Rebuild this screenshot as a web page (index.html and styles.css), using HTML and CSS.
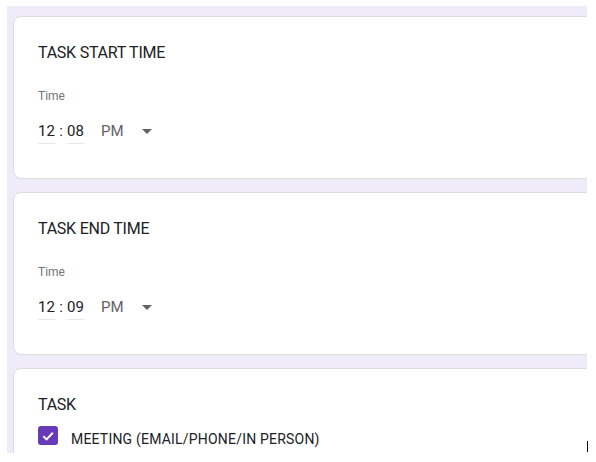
FILE: index.html
```html
<!DOCTYPE html>
<html>
<head>
<meta charset="utf-8">
<link rel="stylesheet" href="styles.css">
</head>
<body>
<div class="page">
  <div class="card">
    <div class="title">TASK START TIME</div>
    <div class="label">Time</div>
    <div class="time-row">
      <span class="field">12</span>
      <span class="colon">:</span>
      <span class="field">08</span>
      <span class="ampm">PM</span>
      <svg class="arrow" width="10" height="5" viewBox="0 0 10 5"><path d="M0 0 L5 5 L10 0 Z" fill="#5f6368"/></svg>
    </div>
  </div>
  <div class="card">
    <div class="title">TASK END TIME</div>
    <div class="label">Time</div>
    <div class="time-row">
      <span class="field">12</span>
      <span class="colon">:</span>
      <span class="field">09</span>
      <span class="ampm">PM</span>
      <svg class="arrow" width="10" height="5" viewBox="0 0 10 5"><path d="M0 0 L5 5 L10 0 Z" fill="#5f6368"/></svg>
    </div>
  </div>
  <div class="card card-task">
    <div class="title">TASK</div>
    <div class="option">
      <span class="checkbox">
        <svg width="14" height="14" viewBox="0 0 14 14"><path d="M2.3 7.2 L5.6 10.4 L11.8 3.8" fill="none" stroke="#fff" stroke-width="2"/></svg>
      </span>
      <span class="option-text">MEETING (EMAIL/PHONE/IN PERSON)</span>
    </div>
  </div>
</div>
<div class="cursor"></div>
</body>
</html>
```

FILE: styles.css
```css
html, body {
  margin: 0;
  padding: 0;
  background: #ffffff;
  font-family: Roboto, "Liberation Sans", sans-serif;
  color: #202124;
}

.page {
  margin: 6px 0 0 7px;
  width: 580px;
  height: 447px;
  background: #f0ebf8;
  overflow: hidden;
  padding: 10px 0 0 6px;
  box-sizing: border-box;
}

.card {
  width: 640px;
  height: 163px;
  box-sizing: border-box;
  background: #ffffff;
  border: 1px solid #dadce0;
  border-radius: 8px;
  padding: 25px 24px 0 24px;
  margin-bottom: 13px;
}

.card-task {
  height: 120px;
  margin-bottom: 0;
}

.title {
  font-size: 16px;
  line-height: 22px;
  color: #202124;
  letter-spacing: -0.25px;
}

.label {
  margin-top: 24px;
  font-size: 12px;
  line-height: 16px;
  color: #70757a;
}

.time-row {
  margin-top: 17px;
  display: flex;
  align-items: flex-start;
  font-size: 15px;
  line-height: 20px;
  color: #202124;
}

.field {
  width: 17px;
  padding-bottom: 2px;
  border-bottom: 1px solid #e8e8e8;
  text-align: left;
}

.colon {
  width: 12px;
  text-align: center;
}

.ampm {
  margin-left: 17px;
  color: #5f6368;
}

.arrow {
  margin-left: 18px;
  margin-top: 8px;
}

.option {
  margin-top: 10px;
  display: flex;
  align-items: flex-start;
}

.checkbox {
  width: 20px;
  height: 19px;
  background: #673ab7;
  border-radius: 3px;
  display: flex;
  align-items: center;
  justify-content: center;
}

.option-text {
  margin-left: 13px;
  margin-top: 3px;
  font-size: 14px;
  line-height: 20px;
  letter-spacing: 0.2px;
  color: #202124;
}

.cursor {
  position: absolute;
  left: 587px;
  top: 441px;
  width: 1px;
  height: 11px;
  background: #000;
}
```
